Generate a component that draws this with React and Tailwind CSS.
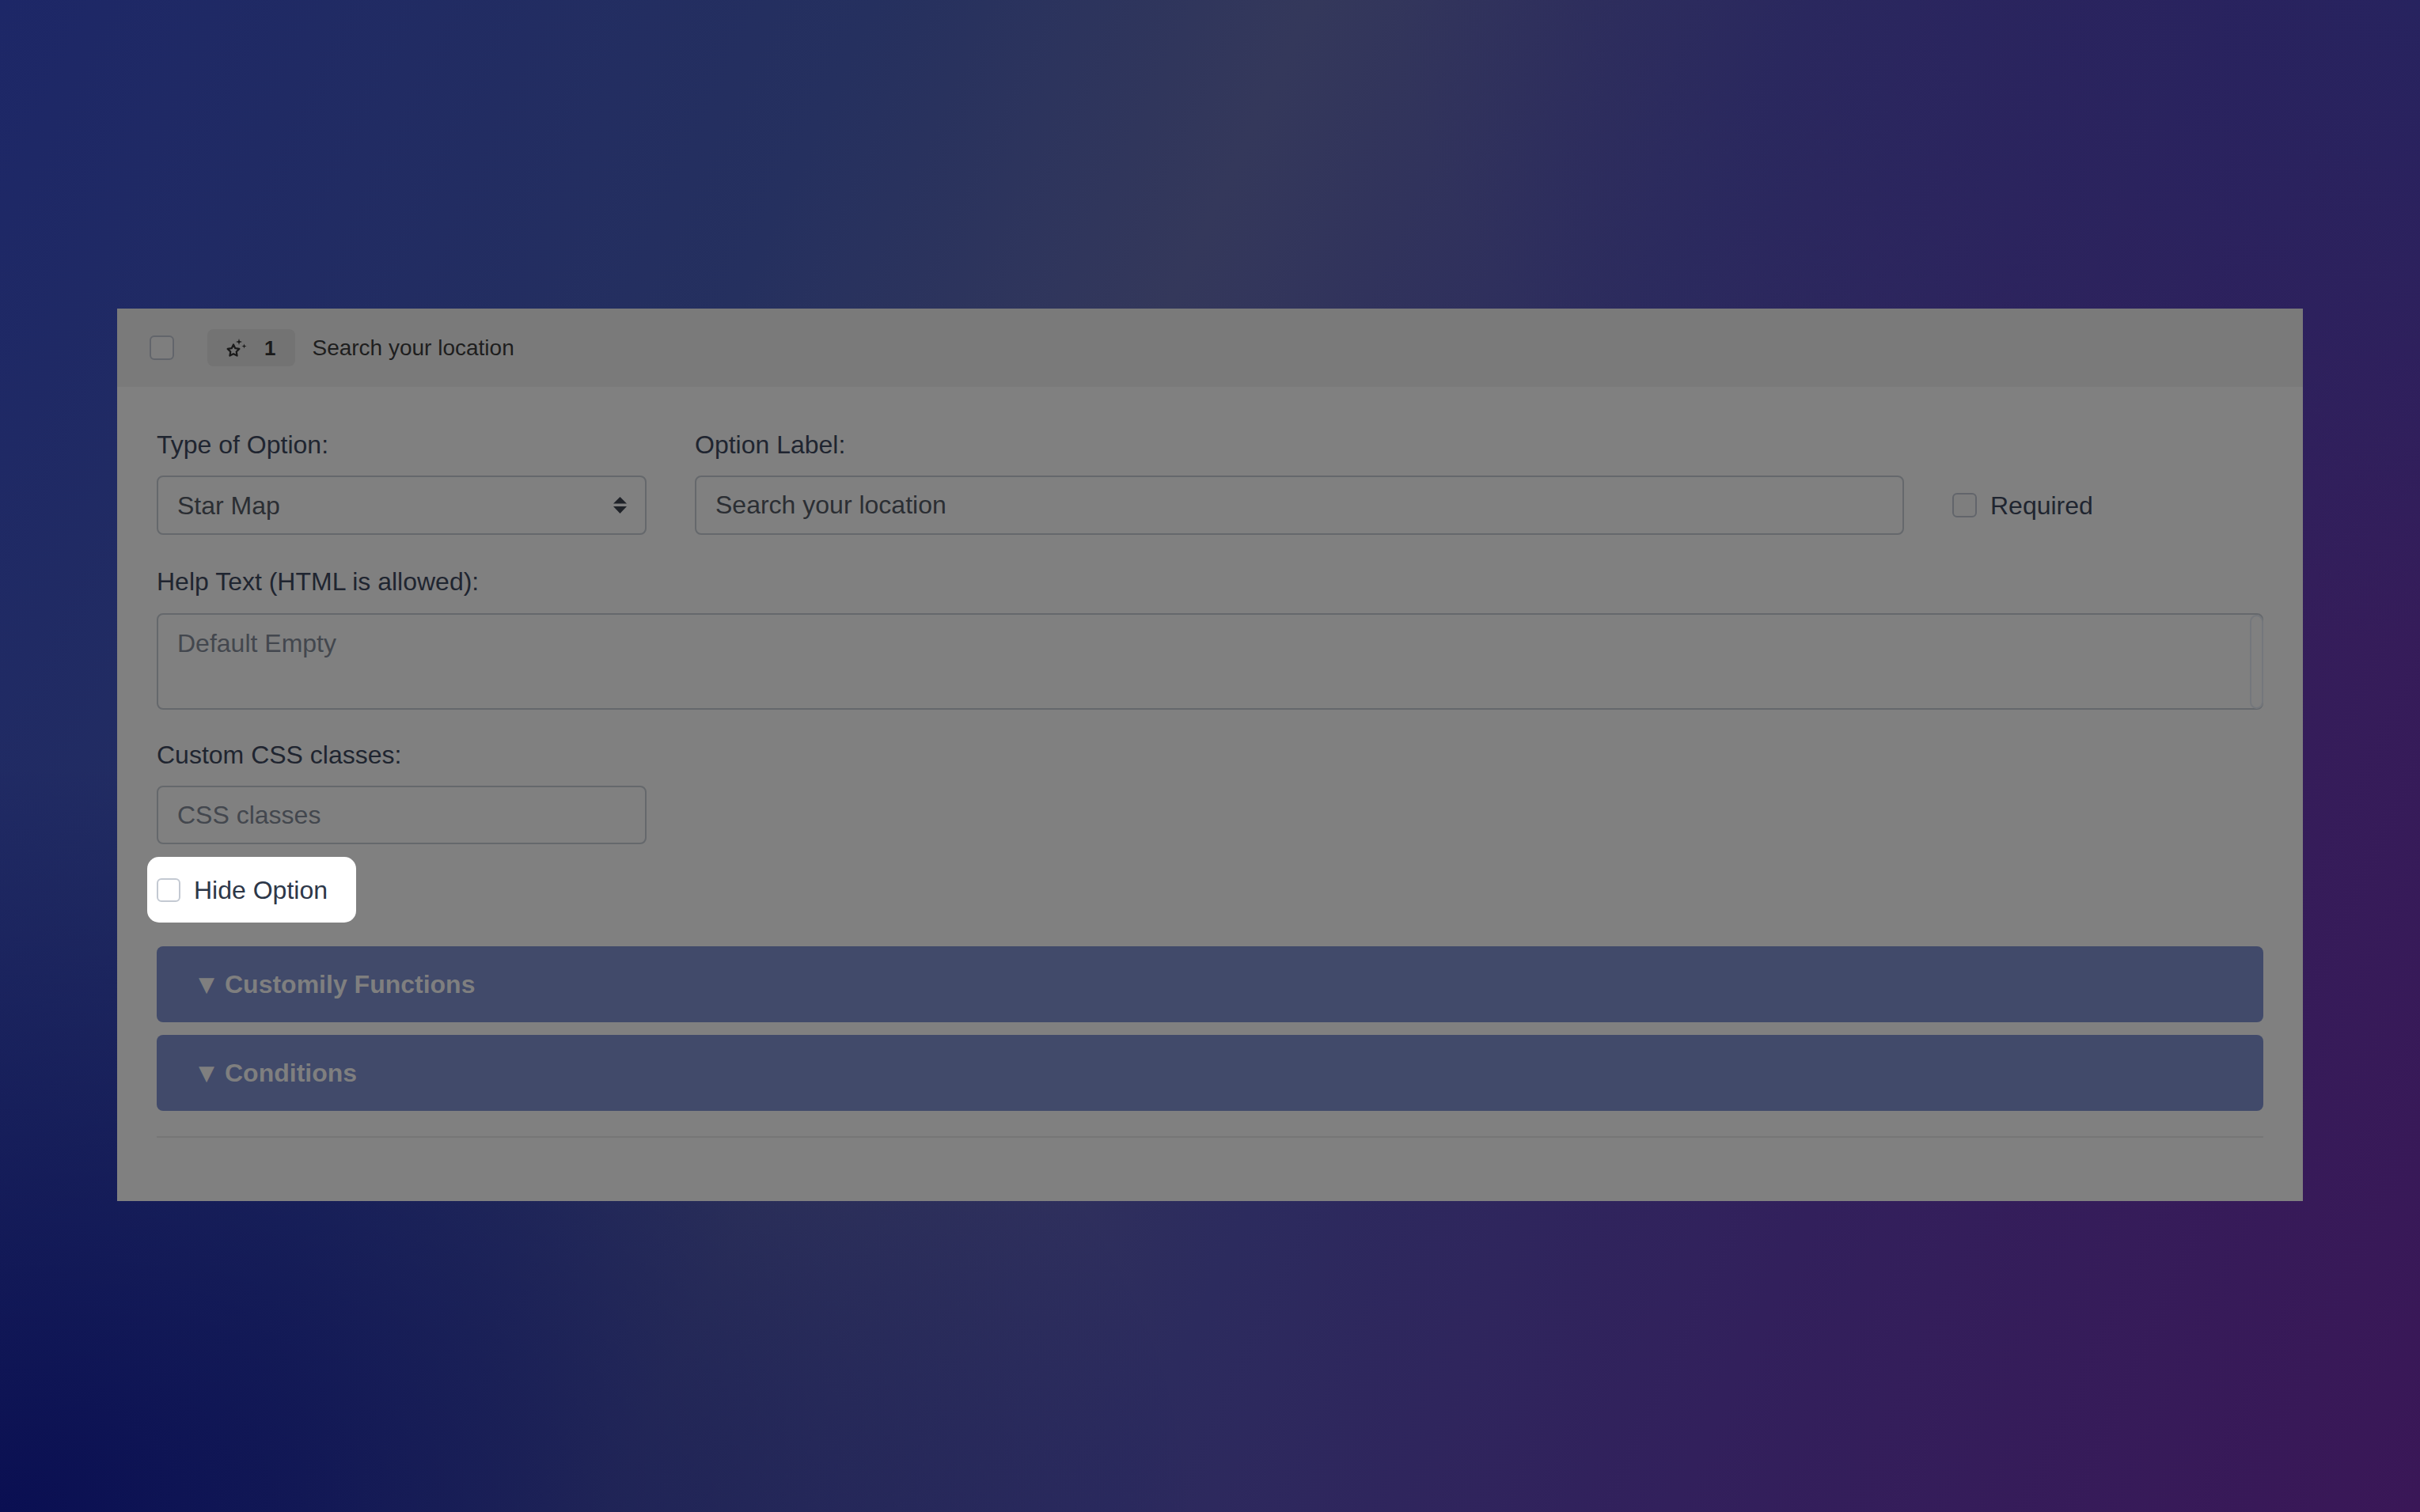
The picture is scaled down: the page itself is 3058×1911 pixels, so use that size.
import React from "react";

function StarSparkIcon() {
  return (
    <svg width="28" height="28" viewBox="0 0 28 28" fill="none">
      <path
        d="M11 9.5 L13.3 14.2 L18.4 14.9 L14.7 18.5 L15.6 23.6 L11 21.2 L6.4 23.6 L7.3 18.5 L3.6 14.9 L8.7 14.2 Z"
        stroke="#1a1a1a"
        strokeWidth="2.2"
        strokeLinejoin="round"
      />
      <path d="M18 2 L18.9 5.1 L22 6 L18.9 6.9 L18 10 L17.1 6.9 L14 6 L17.1 5.1 Z" fill="#1a1a1a" />
      <path d="M24.5 8.5 L25.2 10.8 L27.5 11.5 L25.2 12.2 L24.5 14.5 L23.8 12.2 L21.5 11.5 L23.8 10.8 Z" fill="#1a1a1a" />
    </svg>
  );
}

function SelectArrows() {
  return (
    <svg width="17" height="21" viewBox="0 0 17 21">
      <path d="M8.5 0 L17 8.5 L0 8.5 Z" fill="#1f2228" />
      <path d="M0 12 L17 12 L8.5 21 Z" fill="#1f2228" />
    </svg>
  );
}

export default function App() {
  return (
    <div className="min-h-screen w-full pt-[390px] font-['Liberation_Sans',Arial,sans-serif] bg-[radial-gradient(ellipse_at_0%_100%,#0a0f52_0%,rgba(10,15,82,0)_35%),radial-gradient(ellipse_at_100%_0%,#27235f_0%,rgba(39,35,95,0)_30%),linear-gradient(115deg,#1d2767_0%,#25305f_28%,#34385b_42%,#2c2b5e_58%,#32205c_76%,#3a1757_100%)]">
      <div className="w-[2762px] mx-auto">
        {/* header */}
        <div className="h-[99px] bg-[#7a7a7a] flex items-center pl-[41px]">
          <input
            type="checkbox"
            className="appearance-none w-[31px] h-[31px] border-2 border-[#62656b] rounded-[6px] bg-[#7e7e7e]"
          />
          <div className="ml-[42px] h-[47px] rounded-[8px] bg-[#737373] flex items-center pl-[22px] pr-[25px] gap-[22px]">
            <StarSparkIcon />
            <span className="text-[26px] font-bold text-[#1a1a1a] leading-none">1</span>
          </div>
          <span className="ml-[21px] text-[28px] text-[#1e1e1e]">Search your location</span>
        </div>

        {/* body */}
        <div className="bg-[#808080] pt-[50px] px-[50px] pb-[80px]">
          <div className="grid grid-cols-[619px_1528px_1fr] gap-x-[61px]">
            <div>
              <label className="block text-[32px] leading-[46px] text-[#1f2530]">Type of Option:</label>
              <div className="mt-[16px] h-[75px] border-2 border-[#65686c] rounded-[8px] flex items-center justify-between pl-[24px] pr-[23px]">
                <span className="text-[32px] text-[#2b2e33]">Star Map</span>
                <SelectArrows />
              </div>
            </div>
            <div>
              <label className="block text-[32px] leading-[46px] text-[#1f2530]">Option Label:</label>
              <input
                type="text"
                readOnly
                value="Search your location"
                className="mt-[16px] w-full h-[75px] border-2 border-[#65686c] rounded-[8px] bg-transparent pl-[24px] text-[32px] text-[#2b2e33] outline-none"
              />
            </div>
            <div className="flex items-end">
              <label className="h-[75px] flex items-center gap-[17px]">
                <input
                  type="checkbox"
                  className="appearance-none w-[31px] h-[31px] border-2 border-[#62656b] rounded-[6px] bg-[#7e7e7e]"
                />
                <span className="text-[32px] text-[#1f2530]">Required</span>
              </label>
            </div>
          </div>

          <label className="block mt-[36px] text-[32px] leading-[46px] text-[#1f2530]">Help Text (HTML is allowed):</label>
          <div className="relative mt-[17px] h-[122px]">
            <textarea
              readOnly
              placeholder="Default Empty"
              className="w-full h-full resize-none border-2 border-[#65686c] rounded-[8px] bg-transparent px-[24px] pt-[13px] text-[32px] leading-[46px] placeholder:text-[#43474e] outline-none"
            />
            <div className="absolute right-0 top-[2px] bottom-[1px] w-[17px] rounded-full border-2 border-[#74777c]" />
          </div>

          <label className="block mt-[34px] text-[32px] leading-[46px] text-[#1f2530]">Custom CSS classes:</label>
          <input
            type="text"
            readOnly
            placeholder="CSS classes"
            className="block mt-[16px] w-[619px] h-[74px] border-2 border-[#65686c] rounded-[8px] bg-transparent pl-[24px] text-[32px] placeholder:text-[#43474e] outline-none"
          />

          <div className="mt-[16px] -ml-[12px] w-[264px] h-[83px] bg-white rounded-[15px] flex items-center pl-[12px] gap-[17px]">
            <input
              type="checkbox"
              className="appearance-none w-[30px] h-[30px] border-2 border-[#c3c9d2] rounded-[6px] bg-white"
            />
            <span className="text-[32px] text-[#2d3748]">Hide Option</span>
          </div>

          <div className="mt-[30px] h-[96px] bg-[#414a6a] rounded-[8px] flex items-center pl-[53px] text-[32px] font-bold text-[#7f7f7f]">
            <span className="font-['DejaVu_Sans',sans-serif] text-[26px] mr-[13px]">▼</span>
            Customily Functions
          </div>
          <div className="mt-[16px] h-[96px] bg-[#414a6a] rounded-[8px] flex items-center pl-[53px] text-[32px] font-bold text-[#7f7f7f]">
            <span className="font-['DejaVu_Sans',sans-serif] text-[26px] mr-[13px]">▼</span>
            Conditions
          </div>

          <div className="mt-[32px] h-[2px] bg-[#767676]" />
        </div>
      </div>
    </div>
  );
}
